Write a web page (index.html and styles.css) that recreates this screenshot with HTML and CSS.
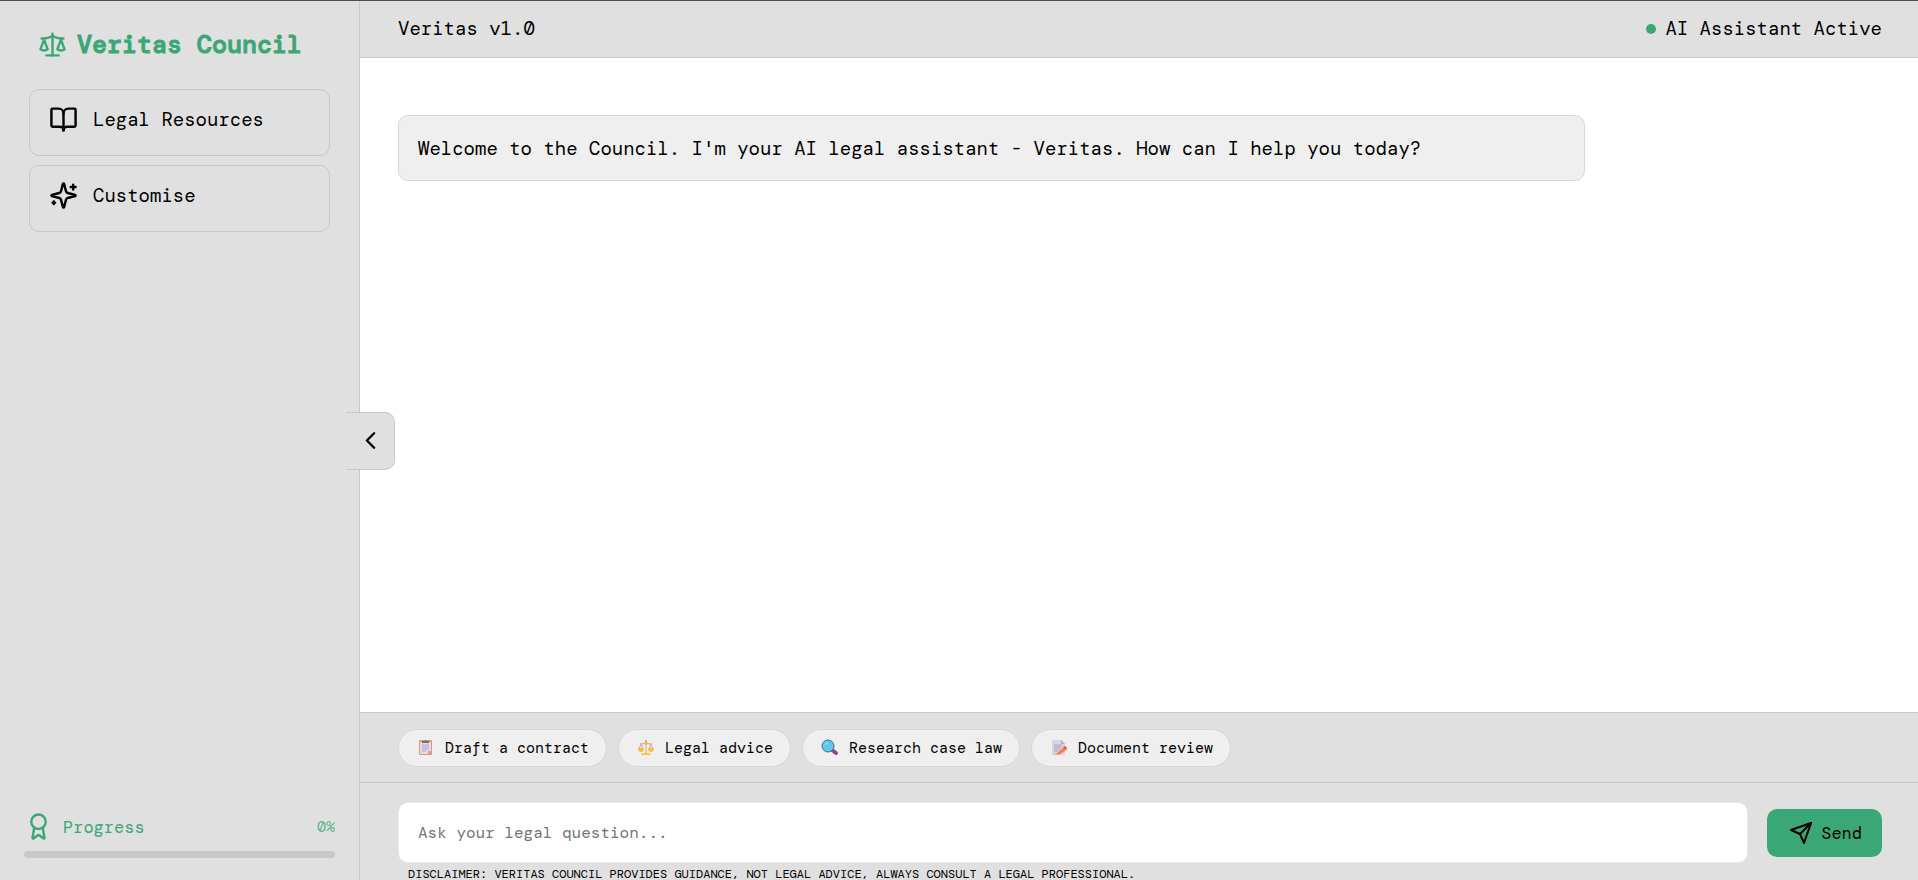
FILE: index.html
```html
<!DOCTYPE html>
<html lang="en">
<head>
<meta charset="utf-8">
<meta name="viewport" content="width=device-width, initial-scale=1">
<title>Veritas Council</title>
<link rel="stylesheet" href="styles.css">
</head>
<body>
<div class="app">
  <aside class="sidebar">
    <h1 class="brand">
      <svg class="icon" viewBox="0 0 24 24" aria-hidden="true"><path d="m16 16 3-8 3 8c-.87.65-1.92 1-3 1s-2.13-.35-3-1Z"/><path d="m2 16 3-8 3 8c-.87.65-1.92 1-3 1s-2.13-.35-3-1Z"/><path d="M7 21h10"/><path d="M12 3v18"/><path d="M3 7h2c2 0 5-1 7-2 2 1 5 2 7 2h2"/></svg>
      <span class="brand-name">Veritas Council</span>
    </h1>
    <nav class="menu">
      <button class="menu-item" type="button">
        <svg class="icon" viewBox="0 0 24 24" aria-hidden="true"><path d="M12 7v14"/><path d="M3 18a1 1 0 0 1-1-1V4a1 1 0 0 1 1-1h5a4 4 0 0 1 4 4 4 4 0 0 1 4-4h5a1 1 0 0 1 1 1v13a1 1 0 0 1-1 1h-6a3 3 0 0 0-3 3 3 3 0 0 0-3-3z"/></svg>
        Legal Resources
      </button>
      <button class="menu-item" type="button">
        <svg class="icon" viewBox="0 0 24 24" aria-hidden="true"><path d="M9.94 15.5A2 2 0 0 0 8.5 14.06l-6.14-1.58a.5.5 0 0 1 0-.96L8.5 9.94A2 2 0 0 0 9.94 8.5l1.58-6.14a.5.5 0 0 1 .96 0L14.06 8.5A2 2 0 0 0 15.5 9.94l6.14 1.58a.5.5 0 0 1 0 .96L15.5 14.06a2 2 0 0 0-1.44 1.44l-1.58 6.14a.5.5 0 0 1-.96 0z"/><path d="M20 3v4"/><path d="M22 5h-4"/><path d="M4 17v2"/><path d="M5 18H3"/></svg>
        Customise
      </button>
    </nav>
    <section class="progress">
      <div class="progress-head">
        <svg class="icon" viewBox="0 0 24 24" aria-hidden="true"><path d="m15.48 12.89 1.51 8.53a.5.5 0 0 1-.81.47l-3.58-2.69a1 1 0 0 0-1.2 0l-3.58 2.69a.5.5 0 0 1-.81-.47l1.51-8.53"/><circle cx="12" cy="8" r="6"/></svg>
        <span class="progress-label">Progress</span>
        <span class="progress-value">0%</span>
      </div>
      <div class="progress-track" role="progressbar" aria-label="Progress" aria-valuenow="0" aria-valuemin="0" aria-valuemax="100"></div>
    </section>
    <button class="collapse" type="button" aria-label="Collapse sidebar">
      <svg class="icon" viewBox="0 0 24 24" aria-hidden="true"><path d="m15 18-6-6 6-6"/></svg>
    </button>
  </aside>

  <main class="main">
    <header class="topbar">
      <span>Veritas v1.0</span>
      <span class="status"><span class="dot"></span>AI Assistant Active</span>
    </header>

    <section class="chat">
      <p class="message">Welcome to the Council. I'm your AI legal assistant - Veritas. How can I help you today?</p>
    </section>

    <section class="chips">
      <button class="chip" type="button">
        <svg class="chip-icon" viewBox="0 0 20 20" aria-hidden="true"><rect x="3" y="2" width="13" height="15" rx="1" fill="#e39a68"/><path d="M4 4h11v9l-3 3H4z" fill="#e2d9ec"/><path d="M12 16v-3h3z" fill="#b9a6cb"/><path d="M6 4V3h2a2 2 0 0 1 3 0h2v2H6z" fill="#776a83"/><path d="M6 7h7M6 9h7M6 11h7M6 13h4" stroke="#b5a7c4" stroke-width="1"/></svg>
        Draft a contract
      </button>
      <button class="chip" type="button">
        <svg class="chip-icon" viewBox="0 0 20 20" aria-hidden="true"><path d="M5 6 3 11M5 6l2 5M15 6l-2 5M15 6l2 5" stroke="#b7a9c5" stroke-width="1" fill="none"/><path d="M9 3h2v12H9z" fill="#e8c9a0"/><path d="M4 5q3 1 6-1 3 2 6 1v1q-3 1-6 0-3 1-6 0z" fill="#edb567"/><circle cx="10" cy="3" r="1" fill="#e79b4b"/><path d="M2 10h6q0 4-3 4t-3-4zM12 10h6q0 4-3 4t-3-4z" fill="#f9b94c"/><path d="M5 17q0-2 3-2h4q3 0 3 2z" fill="#fbc932"/></svg>
        Legal advice
      </button>
      <button class="chip" type="button">
        <svg class="chip-icon" viewBox="0 0 20 20" aria-hidden="true"><path d="m12 12 4 3" stroke="#8a4d86" stroke-width="4" stroke-linecap="round"/><circle cx="8" cy="8" r="6" fill="#5ccbee" stroke="#4b6390" stroke-width="1"/><path d="M5 7q1-2 3-2" stroke="#9fe6fa" stroke-width="1" fill="none"/></svg>
        Research case law
      </button>
      <button class="chip" type="button">
        <svg class="chip-icon" viewBox="0 0 20 20" aria-hidden="true"><path d="M3 2h9l4 4v11H3z" fill="#dcd2e6"/><path d="M12 2v4h4z" fill="#b7a6c6"/><path d="M5 7h8M5 9h8M5 11h6M5 13h4" stroke="#b09fc1" stroke-width="1"/><path d="m8 15 7-6 2 3-7 5z" fill="#fb7f3c"/><path d="m14 9 2-1q2 1 2 3l-1 1z" fill="#ee4b58"/><path d="M5 17l3-2 2 2z" fill="#e2a477"/></svg>
        Document review
      </button>
    </section>

    <footer class="composer">
      <form class="ask">
        <input class="ask-input" type="text" placeholder="Ask your legal question..." aria-label="Ask your legal question">
        <button class="send" type="button">
          <svg class="send-icon" viewBox="0 0 24 24" aria-hidden="true"><path d="m22 2-7 20-4-9-9-4Z"/><path d="M22 2 11 13"/></svg>
          Send
        </button>
      </form>
      <p class="disclaimer">DISCLAIMER: VERITAS COUNCIL PROVIDES GUIDANCE, NOT LEGAL ADVICE, ALWAYS CONSULT A LEGAL PROFESSIONAL.</p>
    </footer>
  </main>
</div>
</body>
</html>
```

FILE: styles.css
```css
* {
  box-sizing: border-box;
}

body {
  margin: 0;
  background: #fff;
  color: #000;
  font-family: "DM Mono", "DejaVu Sans Mono", "Liberation Mono", monospace;
  font-size: 19px;
  line-height: 24px;
}

button,
input {
  font-family: inherit;
  color: inherit;
}

button {
  cursor: pointer;
}

.app {
  display: flex;
  height: 100vh;
  border-top: 1px solid #4f4a5c;
}

.icon {
  width: 29px;
  height: 29px;
  flex: none;
}

.icon,
.send-icon {
  fill: none;
  stroke: currentColor;
  stroke-width: 2;
  stroke-linecap: round;
  stroke-linejoin: round;
}

.sidebar {
  position: relative;
  display: flex;
  flex-direction: column;
  flex: none;
  width: 360px;
  padding: 29px 24px 22px;
  background: #e0e0e0;
  border-right: 1px solid #c8c8c8;
}

.brand {
  display: flex;
  align-items: center;
  gap: 10px;
  margin: 0 0 30px;
  padding-left: 14px;
  color: #3ba676;
  font-size: 25px;
  font-weight: 500;
  line-height: 29px;
  white-space: nowrap;
}

.brand-name {
  -webkit-text-stroke: 1px #3ba676;
}

.menu {
  display: flex;
  flex-direction: column;
  gap: 9px;
  padding: 0 5px;
}

.menu-item {
  display: flex;
  align-items: center;
  gap: 15px;
  padding: 15px 19px 21px;
  background: transparent;
  border: 1px solid #c8c8c8;
  border-radius: 10px;
  font-size: 19px;
  text-align: left;
}

.progress {
  margin-top: auto;
  color: #3ba676;
}

.progress-head {
  display: flex;
  align-items: center;
  gap: 10px;
  margin-bottom: 10px;
}

.progress-label {
  font-size: 17px;
}

.progress-value {
  margin-left: auto;
  font-size: 15px;
  opacity: 0.8;
}

.progress-track {
  height: 7px;
  border-radius: 4px;
  background: #c8c8c8;
}

.collapse {
  position: absolute;
  top: 50%;
  right: -36px;
  display: flex;
  align-items: center;
  justify-content: center;
  width: 49px;
  height: 58px;
  padding: 0;
  transform: translateY(-50%);
  background: #e0e0e0;
  border: 1px solid #c8c8c8;
  border-left: 0;
  border-radius: 0 10px 10px 0;
}

.main {
  display: flex;
  flex: 1;
  flex-direction: column;
  min-width: 0;
}

.topbar {
  display: flex;
  align-items: center;
  justify-content: space-between;
  padding: 16px 36px 16px 38px;
  background: #e0e0e0;
  border-bottom: 1px solid #c8c8c8;
}

.status {
  display: flex;
  align-items: center;
  gap: 9px;
}

.dot {
  width: 10px;
  height: 10px;
  border-radius: 50%;
  background: #3ba676;
}

.chat {
  flex: 1;
  min-height: 0;
  padding: 57px 36px 38px 38px;
  overflow: auto;
}

.message {
  width: 80%;
  margin: 0;
  padding: 21px 19px 19px;
  background: #efefef;
  border: 1px solid #d8d8d8;
  border-radius: 10px;
}

.chips {
  display: flex;
  flex-wrap: wrap;
  gap: 11px;
  padding: 16px 36px 15px 38px;
  background: #e0e0e0;
  border-top: 1px solid #c8c8c8;
}

.chip {
  display: flex;
  align-items: center;
  gap: 9px;
  padding: 8px 17px;
  background: #efefef;
  border: 1px solid #d8d8d8;
  border-radius: 19px;
  font-size: 15px;
  line-height: 20px;
}

.chip-icon {
  width: 20px;
  height: 20px;
}

.composer {
  padding: 19px 36px 0 38px;
  background: #e0e0e0;
  border-top: 1px solid #c8c8c8;
}

.ask {
  display: flex;
  align-items: center;
  gap: 19px;
}

.ask-input {
  flex: 1;
  min-width: 0;
  height: 61px;
  padding: 0 19px;
  background: #fff;
  border: 1px solid #e8e8e8;
  border-radius: 10px;
  font-size: 16px;
}

.ask-input::placeholder {
  color: #757575;
}

.send {
  display: flex;
  align-items: center;
  gap: 8px;
  height: 48px;
  padding: 0 20px 0 22px;
  background: #3ba676;
  border: 0;
  border-radius: 10px;
  font-size: 17px;
}

.send-icon {
  width: 24px;
  height: 24px;
}

.disclaimer {
  margin: 0;
  padding: 5px 0 0 10px;
  font-size: 12px;
  line-height: 12px;
}
```
